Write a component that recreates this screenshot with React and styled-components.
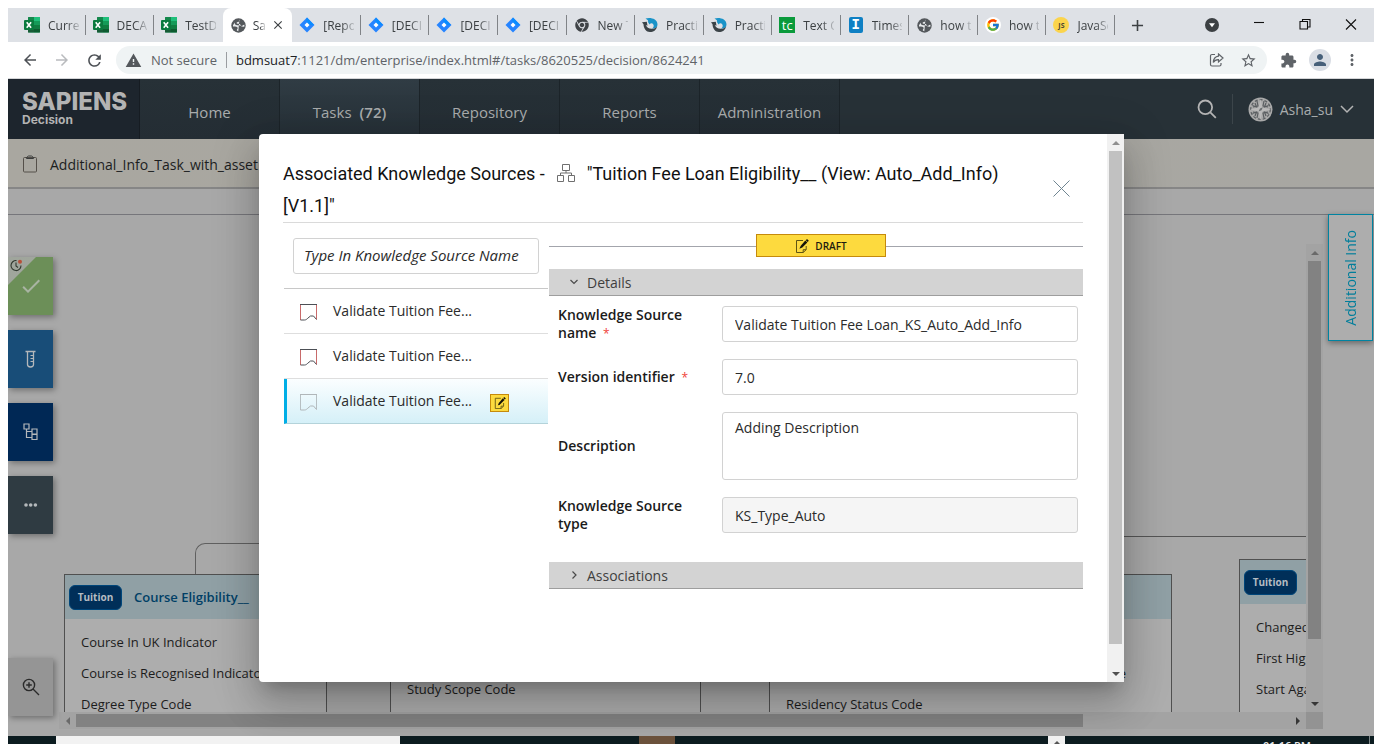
import React from "react";
import styled, { createGlobalStyle, css } from "styled-components";
import {
  MdArrowBack,
  MdArrowForward,
  MdRefresh,
  MdWarning,
  MdStarBorder,
  MdExtension,
  MdPerson,
  MdMoreVert,
  MdAdd,
  MdClose,
  MdCheck,
} from "react-icons/md";
import { FcGoogle } from "react-icons/fc";
import { FaChrome } from "react-icons/fa";

const GlobalStyle = createGlobalStyle`
  * { box-sizing: border-box; }
  body {
    margin: 0;
    background: #fff;
    font-family: "Open Sans", "Noto Sans", sans-serif;
    font-size: 14px;
    overflow: hidden;
  }
  button, input, textarea { font: inherit; color: inherit; }
  button { border: 0; padding: 0; background: none; cursor: pointer; }
  a { color: inherit; text-decoration: none; }
  svg { display: block; flex: none; }
`;

const Screen = styled.div`
  display: flex;
  flex-direction: column;
  height: 100vh;
  padding: 8px 8px 0;
`;

/* ---------- browser chrome ---------- */

const TabStrip = styled.div`
  display: flex;
  align-items: stretch;
  height: 34px;
  padding-left: 9px;
  background: #dee1e6;
`;

const Tabs = styled.div`
  display: flex;
  flex: 0 1 1098px;
  min-width: 0;
`;

const Tab = styled.button`
  position: relative;
  display: flex;
  align-items: center;
  flex: 1;
  min-width: 0;
  gap: 8px;
  padding: 0 7px;
  font-size: 12px;
  color: #3c4043;
  text-align: left;
  ${(p) =>
    p.$active
      ? css`
          background: #fff;
          border-radius: 8px 8px 0 0;
          padding-left: 8px;
          gap: 6px;
        `
      : css`
          &::after {
            content: "";
            position: absolute;
            right: 0;
            top: 7px;
            width: 1px;
            height: 20px;
            background: ${p.$noRule ? "transparent" : "#808387"};
          }
        `}
`;

const Favicon = styled.span`
  display: flex;
  justify-content: center;
  flex: 0 0 16px;
`;

const TabLabel = styled.span`
  flex: 1;
  min-width: 0;
  overflow: hidden;
  white-space: nowrap;
  mask-image: linear-gradient(to right, #000 60%, rgba(0, 0, 0, 0.2));
`;

const WindowControls = styled.div`
  display: flex;
  align-items: center;
  margin-left: auto;
  padding-right: 17px;
  gap: 34px;
  color: #111;
`;

const NewTab = styled.button`
  display: flex;
  align-items: center;
  padding-left: 13px;
  color: #3c4043;
`;

const IconButton = styled.button`
  display: flex;
  color: ${(p) => p.$color || "#5f6368"};
`;

const Toolbar = styled.div`
  display: flex;
  align-items: center;
  height: 37px;
  padding: 0 13px;
  background: #fff;
  border-bottom: 1px solid #d5d6d8;
`;

const NavButtons = styled.div`
  display: flex;
  gap: 14px;
  margin-right: 12px;
`;

const Omnibox = styled.div`
  display: flex;
  align-items: center;
  flex: 1;
  height: 28px;
  padding: 0 10px 0 9px;
  border-radius: 14px;
  background: #eff3f4;
  color: #5f6368;
  font-size: 13px;
  gap: 9px;
`;

const OmniActions = styled.div`
  display: flex;
  align-items: center;
  gap: 16px;
`;

const Separator = styled.span`
  width: 1px;
  height: 16px;
  background: #9a9da1;
`;

const Url = styled.span`
  flex: 1;
  white-space: nowrap;
  b {
    font-weight: 400;
    color: #202124;
  }
`;

const ToolIcons = styled.div`
  display: flex;
  align-items: center;
  gap: 12px;
  padding-left: 13px;
`;

const Avatar = styled.span`
  display: flex;
  align-items: center;
  justify-content: center;
  width: 22px;
  height: 22px;
  border-radius: 50%;
  background: #dadee5;
  color: #47607a;
`;

/* ---------- application ---------- */

const Page = styled.main`
  position: relative;
  display: flex;
  flex-direction: column;
  flex: 1;
  min-height: 0;
  background: #a8a8a8;
  overflow: hidden;
`;

const Header = styled.header`
  display: flex;
  flex: 0 0 60px;
  background: #273137;
  color: #a9acad;
`;

const Logo = styled.a`
  width: 132px;
  padding: 11px 0 0 14px;
  background: #1d252d;
  border-right: 1px solid #161c22;
  font-family: Inter, sans-serif;
  font-weight: 800;
  font-size: 24px;
  line-height: 23px;
  color: #b3b3b3;
  small {
    display: block;
    font-size: 12px;
    font-weight: 700;
    line-height: 14px;
  }
`;

const NavLink = styled.a`
  display: flex;
  align-items: center;
  justify-content: center;
  gap: 8px;
  width: 140px;
  padding-top: 5px;
  font-size: 15px;
  border-right: 1px solid #1c2429;
  background: ${(p) =>
    p.$active
      ? "linear-gradient(#303c44, #252f36)"
      : "linear-gradient(#273137, #242d34)"};
  b {
    font-weight: 600;
  }
`;

const UserArea = styled.div`
  display: flex;
  align-items: center;
  margin-left: auto;
  padding-right: 20px;
  gap: 15px;
`;

const HeaderRule = styled.span`
  width: 1px;
  height: 30px;
  background: #3c454a;
`;

const UserMenu = styled.button`
  display: flex;
  align-items: center;
  gap: 7px;
`;

const TaskBarRow = styled.div`
  display: flex;
  align-items: center;
  flex: 0 0 50px;
  gap: 12px;
  padding: 2px 15px 0;
  background: linear-gradient(to right, #a9a7a0, #a8a7a2);
  border-bottom: 2px solid #868686;
  color: #1c1e1f;
`;

const Strip = styled.div`
  flex: 0 0 26px;
  border-bottom: 1px solid #76767b;
`;

const Workspace = styled.div`
  display: flex;
  flex: 1;
  min-height: 0;
`;

const SideTools = styled.div`
  display: flex;
  flex-direction: column;
  flex: 0 0 45px;
  gap: 15px;
  padding: 42px 0 20px;
`;

const SideButton = styled.button`
  position: relative;
  display: flex;
  align-items: center;
  justify-content: center;
  flex: 0 0 58px;
  background: ${(p) => p.$bg};
  color: ${(p) => p.$color || "#b4b8bb"};
  box-shadow: 2px 2px 6px rgba(0, 0, 0, 0.35);
  &:last-child {
    margin-top: auto;
  }
`;

const Corner = styled.span`
  position: absolute;
  left: 0;
  top: 0;
  width: 28px;
  height: 28px;
  padding: 2px;
  background: linear-gradient(135deg, #9fa59c, #a1a79c);
  clip-path: polygon(0 0, 100% 0, 0 100%);
`;

const DiagramFrame = styled.div`
  display: grid;
  grid-template-columns: 1fr 17px;
  grid-template-rows: 1fr 17px;
  flex: 1;
  min-width: 0;
  margin: 29px 0 7px 6px;
`;

const Diagram = styled.div`
  position: relative;
  overflow: hidden;
`;

const ScrollCorner = styled.div`
  background: #939393;
`;

const Scrollbar = styled.div`
  display: flex;
  flex-direction: ${(p) => (p.$vertical ? "column" : "row")};
  align-items: center;
  background: ${(p) => p.$track};
`;

const ScrollArrow = styled.button`
  display: flex;
  align-items: center;
  justify-content: center;
  flex: none;
  width: 17px;
  height: 17px;
  color: ${(p) => p.$color};
`;

const ScrollTrack = styled.div`
  display: flex;
  flex-direction: inherit;
  align-items: center;
  flex: 1;
  min-height: 0;
`;

const ScrollThumb = styled.div`
  background: ${(p) => p.$thumb};
  ${(p) =>
    p.$vertical
      ? css`
          width: 13px;
          height: ${p.$size};
        `
      : css`
          height: 13px;
          width: ${p.$size};
        `}
`;

const RightRail = styled.div`
  flex: 0 0 51px;
  padding: 0 1px 0 5px;
  margin-top: -1px;
`;

const InfoTab = styled.button`
  display: flex;
  align-items: center;
  justify-content: center;
  width: 45px;
  height: 127px;
  border: 1px solid #0083a1;
  background: #adadad;
  color: #007e9b;
  box-shadow: 0 2px 6px rgba(0, 0, 0, 0.4);
  span {
    writing-mode: vertical-rl;
    rotate: 180deg;
  }
`;

const Node = styled.article`
  position: absolute;
  left: ${(p) => p.$x}px;
  top: ${(p) => p.$y}px;
  width: ${(p) => p.$w}px;
  height: 200px;
  border: 1px solid #505050;
  background: #adadad;
`;

const NodeHead = styled.div`
  display: flex;
  align-items: center;
  gap: 12px;
  height: 44px;
  padding: 0 4px;
  background: #90a0a5;
  color: #003f66;
  font-size: 13px;
  font-weight: 600;
  white-space: nowrap;
`;

const NodeTag = styled.span`
  display: flex;
  align-items: center;
  justify-content: center;
  width: 53px;
  height: 25px;
  border: 1px solid #00467a;
  border-radius: 6px;
  background: #002f59;
  color: #b5bcc2;
  font-size: 10px;
  font-weight: 700;
`;

const NodeItems = styled.ul`
  margin: 0;
  padding: ${(p) => p.$pad || 8}px 16px;
  list-style: none;
  font-size: 13px;
  line-height: 31px;
  color: #1c1c1c;
  white-space: nowrap;
  li {
    height: 31px;
  }
`;

const TailItem = styled.li`
  padding-right: 29px;
  text-align: right;
`;

const LeftLink = styled.div`
  position: absolute;
  left: 136px;
  top: 299px;
  width: 400px;
  height: 31px;
  border: 1px solid #606060;
  border-width: 1px 0 0 1px;
  border-radius: 10px 0 0 0;
`;

const RightLink = styled.div`
  position: absolute;
  left: 800px;
  right: 0;
  top: 292px;
  height: 1px;
  background: #555;
`;

/* ---------- dialog ---------- */

const Overlay = styled.div`
  position: absolute;
  inset: 0;
  display: flex;
  justify-content: center;
  padding: 55px 0 54px 1px;
`;

const Dialog = styled.section`
  display: flex;
  width: 865px;
  max-width: 94%;
  border-radius: 4px 0 0 4px;
  overflow: hidden;
  background: #fff;
  color: #1b1b1b;
  box-shadow: 0 11px 15px -7px rgba(0, 0, 0, 0.2),
    0 24px 38px 3px rgba(0, 0, 0, 0.14), 0 9px 46px 8px rgba(0, 0, 0, 0.12);
`;

const DialogBody = styled.div`
  flex: 1;
  min-width: 0;
  padding: 24px 24px 0;
`;

const DialogHead = styled.div`
  display: flex;
  align-items: center;
  justify-content: space-between;
  border-bottom: 1px solid #dadada;
`;

const DialogClose = styled(IconButton)`
  padding: 0 13px 4px;
`;

const DialogTitle = styled.h2`
  max-width: 740px;
  margin: 0;
  font-family: Roboto, sans-serif;
  font-size: 18px;
  font-weight: 400;
  line-height: 32px;
  color: #111;
  svg {
    display: inline-block;
    margin: 0 7px 0 8px;
    vertical-align: -2px;
  }
`;

const Columns = styled.div`
  display: grid;
  grid-template-columns: 266px 1fr;
`;

const ListColumn = styled.div`
  padding: 0 1px;
`;

const SearchBox = styled.div`
  padding: 15px 9px 14px;
  border-bottom: 1px solid #c8c8c8;
`;

const fieldStyle = css`
  display: block;
  width: 100%;
  height: 36px;
  padding: 0 12px;
  border: 1px solid #d2d2d2;
  border-radius: 3px;
  background: #fff;
  color: #2b2b2b;
  outline: 0;
`;

const Field = styled.input`
  ${fieldStyle}
  &:disabled {
    background: #f5f5f5;
  }
`;

const SearchField = styled.input`
  ${fieldStyle}
  padding: 0 10px 2px;
  font-size: 15px;
  &::placeholder {
    color: #2b2b2b;
    font-style: italic;
    opacity: 1;
  }
`;

const Source = styled.button`
  display: flex;
  align-items: center;
  width: 100%;
  height: 45px;
  padding: 0 0 2px ${(p) => (p.$selected ? 13 : 16)}px;
  gap: 15px;
  border-bottom: 1px solid #dedede;
  color: #2b2b2b;
  ${(p) =>
    p.$selected &&
    css`
      border-left: 3px solid #00aee6;
      border-bottom-color: #b4d3da;
      background: linear-gradient(#fbfeff, #d5f0f8);
    `}
`;

const SourceIcon = styled.span`
  padding-top: 4px;
`;

const TextArea = styled.textarea`
  ${fieldStyle}
  height: 68px;
  padding: 5px 12px;
  line-height: 20px;
  resize: none;
`;

const DraftMark = styled.span`
  display: flex;
  align-items: center;
  justify-content: center;
  width: 19px;
  height: 18px;
  margin: 5px 0 0 3px;
  border: 1px solid #c58a0c;
  background: #fdda3e;
`;

const Status = styled.div`
  display: flex;
  align-items: center;
  padding: 11px 0 12px;
  &::before,
  &::after {
    content: "";
    height: 1px;
    margin-top: 2px;
    background: #a3a5ac;
  }
  &::before {
    flex: 207;
  }
  &::after {
    flex: 197;
  }
`;

const StatusBadge = styled.span`
  display: flex;
  align-items: center;
  justify-content: center;
  gap: 6px;
  width: 130px;
  height: 23px;
  border: 1px solid #c58a0c;
  background: #fdda3e;
  font-size: 10px;
  font-weight: 600;
  color: #1c1a10;
`;

const SectionBar = styled.button`
  display: flex;
  align-items: center;
  width: 100%;
  height: 27px;
  gap: 8px;
  padding-left: 20px;
  border-bottom: 1px solid #9e9e9e;
  background: #d3d3d3;
  color: #3f3f3f;
`;

const Form = styled.form`
  display: grid;
  gap: 17px;
  padding: 10px 5px 29px 9px;
`;

const FormRow = styled.div`
  display: grid;
  grid-template-columns: 164px 1fr;
  align-items: center;
`;

const Label = styled.label`
  padding-right: 20px;
  font-weight: 600;
  line-height: 18px;
  i {
    margin-left: 3px;
    font-size: 12px;
    font-style: normal;
    font-weight: 400;
    line-height: 1;
    color: #f0433a;
  }
`;

/* ---------- desktop task bar ---------- */

const OsBar = styled.footer`
  display: flex;
  flex: 0 0 8px;
  padding: 0 4px 0 48px;
  overflow: hidden;
  background: #0c1c20;
  color: #e8e8e8;
`;

const OsBlock = styled.span`
  display: flex;
  justify-content: center;
  flex: 0 0 ${(p) => p.$w}px;
  padding-top: 5px;
  background: ${(p) => p.$bg};
  margin-left: ${(p) => p.$gap || 0}px;
  color: #555;
`;

const Clock = styled.time`
  height: 8px;
  margin-left: auto;
  padding-right: 58px;
  border-right: 1px solid #7d8789;
  font-size: 11px;
  font-weight: 600;
  line-height: 20px;
`;

/* ---------- drawings ---------- */

const ExcelIcon = () => (
  <svg width="16" height="16" viewBox="0 0 16 16">
    <rect x="4" width="12" height="15.500" rx="1" fill="#21a366" />
    <path d="M4 0h6v4H4z" fill="#107c41" opacity=".7" />
    <path d="M10 0h6v4h-6z" fill="#1fbf7b" />
    <path d="M10 4h6v4h-6z" fill="#159a58" />
    <path d="M4 8h6v7.500H4z" fill="#185c37" />
    <path d="M10 8h6v4h-6z" fill="#107c41" />
    <path d="M10 12h6v3.500h-6z" fill="#0d5c30" />
    <rect y="3" width="10" height="10" rx="1" fill="#0a7a3e" />
    <path d="M2.700 5.200l4.400 5.600M7.100 5.200l-4.400 5.600" stroke="#fff" strokeWidth="1.600" />
  </svg>
);

const GlobeIcon = () => (
  <svg width="15" height="15" viewBox="0 0 16 16">
    <circle cx="8" cy="8" r="7.700" fill="#54585c" />
    <path
      d="M9 1.600c1 1.600-.4 2.300-2 2.600-1.300.5-1.400 1.400-.4 1.900 1.700-.1 3.600 0 3.600 1.600.5 1.200 2 .9 2.700-.2l1.500-.3-.2 2c-1.600.3-2.700.1-3.700-.6C9.200 7.800 8 7.900 6.800 7.800 4.800 7.700 3.700 6.500 4 4.900L2.100 7.600l.1 1.600c2 0 4.300-.1 4.900 1.300.4 1.200-1 1.500-.9 2.800l1.600.8"
      fill="#e8eaec"
    />
  </svg>
);

const JiraIcon = () => (
  <svg width="16" height="16" viewBox="0 0 16 16">
    <path d="M8 .5L15.500 8 8 15.500.5 8z" fill="#2684ff" />
    <path d="M8 .5c-1.500 2-1 3.500 0 5L10.500 8l4.500 0z" fill="#0a8cff" />
    <path d="M8 5.500L10.500 8 8 10.500 5.500 8z" fill="#fff" />
  </svg>
);

const SwirlIcon = () => (
  <svg width="16" height="16" viewBox="0 0 16 16">
    <path d="M3.500 1.500C8 0 15.500 1.500 15.500 7.500c0 3-2.500 4.500-5.500 4 1.700-.9 2.300-2.600 1.200-4.200C10.300 6 8.700 6 7.500 7.500L5.800 4.800C7 4 5.500 2.800 3.500 1.500z" fill="#1a93c8" />
    <path d="M0 5.200l4.800-.4.700 4-1.700-.7c.8 2.200 3 3.600 5.700 3.700 2.400.1 4.300-.8 5.700-2.600-.9 3.900-3.900 6-7.400 5.900C4.300 15 1.600 11.500 1.500 7.300z" fill="#3b4348" />
  </svg>
);

const SquareIcon = styled.span`
  display: flex;
  align-items: center;
  justify-content: center;
  width: ${(p) => p.$w || 16}px;
  height: 16px;
  border-radius: ${(p) => p.$radius || 0}px;
  background: ${(p) => p.$bg};
  color: ${(p) => p.$color || "#fff"};
  font: ${(p) => p.$font};
`;

const OrgIcon = () => (
  <svg width="18" height="18" viewBox="0 0 18 18" fill="none" stroke="#6f6f6f">
    <path d="M5.500.5h7v6h-7zM.5 11.500h6v6h-6zM11.500 11.500h6v6h-6zM9 6.500v2.500M3.500 11.500V9h11v2.500" />
  </svg>
);

const BookmarkIcon = ({ faded }) => (
  <svg
    width="18"
    height="18"
    viewBox="0 0 18 18"
    fill="none"
    stroke={faded ? "#b6bfc2" : "#c86a6a"}
  >
    <path d="M.5 1v16M16.500 1v15.500" />
    <path
      d="M0 1.500h17M.5 17h4c1.500 0 2.500-1 3.500-2l2.500-2h3l3 3.500"
      stroke={faded ? "#b0b6b9" : "#4c4f55"}
    />
  </svg>
);

const EditIcon = ({ size }) => (
  <svg width={size} height={size} viewBox="0 0 14 14" fill="none">
    <path
      d="M8 1.500H1.500v12h6.700l3-2.800V7M8.200 13.300v-2.600h2.900"
      stroke="#5f5413"
    />
    <path d="M12 0l1.800 1.800-1.200 1.200-1.800-1.800z" fill="#15130a" />
    <path d="M10.300 1.600l2 2-5 5-2.900 1.200 1.200-2.900z" fill="#15130a" />
  </svg>
);

const CrossIcon = () => (
  <svg width="17" height="17" viewBox="0 0 17 17" stroke="#6f8591" fill="none">
    <path d="M.5.5l16 16M16.500.5l-16 16" />
  </svg>
);

const Chevron = ({ right }) => (
  <svg width="10" height="10" viewBox="0 0 10 10" fill="none" stroke="#4a4a4a" strokeWidth="1.200">
    <path d={right ? "M3.500 1.500L7 5 3.500 8.500" : "M1.500 3L5 6.500 8.500 3"} />
  </svg>
);

const arrows = {
  up: "M4 0l4 4H0z",
  down: "M0 0h8L4 4z",
  left: "M4 0v8L0 4z",
  right: "M0 0l4 4-4 4z",
};

const Triangle = ({ dir }) => {
  const flat = dir === "up" || dir === "down";
  return (
    <svg width={flat ? 8 : 4} height={flat ? 4 : 8} fill="currentColor">
      <path d={arrows[dir]} />
    </svg>
  );
};

const ClipboardIcon = () => (
  <svg width="15" height="18" viewBox="0 0 15 18" fill="none" stroke="#3a3c3c">
    <rect x=".5" y="2.500" width="13" height="14.500" rx="1" stroke="#55504a" />
    <path d="M3.500 3.500v-1l2-1.500h3l2 1.500v1z" />
  </svg>
);

const MandalaIcon = () => (
  <svg width="25" height="25" viewBox="0 0 25 25">
    <circle cx="12.500" cy="12.500" r="12" fill="#a9a9a9" />
    <g fill="none" stroke="#5a5e61" strokeWidth="1.200">
      <circle cx="12.500" cy="12.500" r="9.800" strokeDasharray="3 2" />
      <path d="M4.500 8.500l4 1.500-1.500-4M20.500 8.500l-4 1.500 1.500-4M4.500 16.500l4-1.500-1.500 4M20.500 16.500l-4-1.500 1.500 4" />
      <path d="M9 4l1 5-5 1M16 4l-1 5 5 1M9 21l1-5-5-1M16 21l-1-5 5-1" />
    </g>
    <path d="M12.500 2l2 8.500 8.500 2-8.500 2-2 8.500-2-8.500-8.500-2 8.500-2z" fill="#bababa" />
    <path d="M10.500 14.500l1.500-3 2.800-1.200-1.300 3z" fill="#6a6e70" />
  </svg>
);

const SearchIcon = () => (
  <svg width="20" height="20" viewBox="0 0 20 20" fill="none" stroke="#b4b4b4" strokeWidth="1.800">
    <circle cx="8.300" cy="8.300" r="6.800" />
    <path d="M13.300 13.300l5.500 5.500" />
  </svg>
);

const TubeIcon = () => (
  <svg width="11" height="18" viewBox="0 0 11 18" fill="none" stroke="currentColor">
    <path d="M.5 1.500h10M2.500 1.500v13c0 3.300 6 3.300 6 0v-13" strokeWidth="1.300" />
    <path d="M5.500 5.500h3M5.500 8.500h3M5.500 11.500h3" />
  </svg>
);

const TreeIcon = () => (
  <svg width="15" height="18" viewBox="0 0 15 18" fill="none" stroke="currentColor" strokeWidth="1.200">
    <path d="M1 1h5v5H1zM9 6h5v5H9zM9 11.500h5v5H9zM3.500 6v8.500H9M3.500 8.500H9" />
  </svg>
);

const ZoomInIcon = () => (
  <svg width="18" height="18" viewBox="0 0 18 18" fill="none" stroke="#2a2a2a" strokeWidth="1.400">
    <circle cx="7" cy="7" r="5.600" />
    <path d="M11 11l6 6M7 4.200v5.600M4.200 7h5.600" />
  </svg>
);

const ClockIcon = () => (
  <svg width="13" height="13" viewBox="0 0 13 13" fill="none" stroke="#30382f" strokeWidth="1.100">
    <path d="M6.500 1.600A5 5 0 1 0 11 6.500M6 3.500v3.500l2 1.500" />
    <circle cx="10" cy="2.800" r="2" fill="#b8503a" stroke="none" />
  </svg>
);

const DotsIcon = () => (
  <svg width="14" height="4" viewBox="0 0 14 4" fill="currentColor">
    <circle cx="2" cy="2" r="1.800" />
    <circle cx="6.700" cy="2" r="1.800" />
    <circle cx="11.400" cy="2" r="1.800" />
  </svg>
);

const ShareIcon = () => (
  <svg width="15" height="14" viewBox="0 0 15 14" fill="none" stroke="currentColor" strokeWidth="1.200">
    <path d="M6 1.500H3A1.500 1.500 0 0 0 1.500 3v8.500A1.500 1.500 0 0 0 3 13h7.500a1.500 1.500 0 0 0 1.500-1.500V10" />
    <path d="M9.500 1l4.500 4-4.500 4V6.700C7 6.600 5.500 7.500 4.300 9.500 4.500 6 6.200 3.600 9.500 3.200z" />
  </svg>
);

const WindowIcon = ({ d }) => (
  <svg width="12" height="12" viewBox="0 0 12 12" fill="none" stroke="#111" strokeWidth="1.100">
    <path d={d} />
  </svg>
);

/* ---------- data ---------- */

const tabs = [
  { icon: <ExcelIcon />, label: "Current" },
  { icon: <ExcelIcon />, label: "DECAF" },
  { icon: <ExcelIcon />, label: "TestData", noRule: true },
  { icon: <GlobeIcon />, label: "Sapiens", active: true },
  { icon: <JiraIcon />, label: "[Report" },
  { icon: <JiraIcon />, label: "[DECIS" },
  { icon: <JiraIcon />, label: "[DECIS" },
  { icon: <JiraIcon />, label: "[DECIS" },
  { icon: <FaChrome size={14} color="#3f4347" />, label: "New Tab" },
  { icon: <SwirlIcon />, label: "Practice" },
  { icon: <SwirlIcon />, label: "Practice" },
  {
    icon: (
      <SquareIcon $bg="#0a9a3c" $font='13px "Open Sans", sans-serif'>
        tc
      </SquareIcon>
    ),
    label: "Text Co",
  },
  {
    icon: (
      <SquareIcon $bg="#0f80c4" $w={14} $radius={2} $font='bold 14px "Liberation Mono", monospace'>
        I
      </SquareIcon>
    ),
    label: "Timesh",
  },
  { icon: <GlobeIcon />, label: "how to" },
  {
    icon: (
      <SquareIcon $bg="#fff" $radius={8}>
        <FcGoogle size={14} />
      </SquareIcon>
    ),
    label: "how to",
  },
  {
    icon: (
      <SquareIcon $bg="#fbd44c" $color="#4b4630" $radius={8} $font='bold 7px "Open Sans", sans-serif'>
        JS
      </SquareIcon>
    ),
    label: "JavaScr",
  },
];

const navItems = ["Repository", "Reports", "Administration"];

const ScrollBarView = ({ vertical, track, thumb, size, first, last }) => (
  <Scrollbar $vertical={vertical} $track={track}>
    <ScrollArrow $color={first} aria-label={vertical ? "Scroll up" : "Scroll left"}>
      <Triangle dir={vertical ? "up" : "left"} />
    </ScrollArrow>
    <ScrollTrack>
      <ScrollThumb $vertical={vertical} $thumb={thumb} $size={size} />
    </ScrollTrack>
    <ScrollArrow $color={last} aria-label={vertical ? "Scroll down" : "Scroll right"}>
      <Triangle dir={vertical ? "down" : "right"} />
    </ScrollArrow>
  </Scrollbar>
);

const Browser = () => (
  <>
    <TabStrip>
      <Tabs>
        {tabs.map((tab, i) => (
          <Tab key={i} $active={tab.active} $noRule={tab.noRule}>
            <Favicon>{tab.icon}</Favicon>
            <TabLabel>{tab.label}</TabLabel>
            {tab.active && <MdClose size={14} />}
          </Tab>
        ))}
      </Tabs>
      <NewTab aria-label="New tab">
        <MdAdd size={19} />
      </NewTab>
      <WindowControls>
        <IconButton aria-label="Search tabs">
          <svg width="14" height="14" viewBox="0 0 14 14">
            <circle cx="7" cy="7" r="7" fill="#3c4043" />
            <path d="M4 5.200h6L7 9.200z" fill="#fff" />
          </svg>
        </IconButton>
        <IconButton aria-label="Minimize">
          <WindowIcon d="M1 3.500h10" />
        </IconButton>
        <IconButton aria-label="Restore">
          <WindowIcon d="M1 2.500h7.500V10H1zM3.500 2.500V.5H11V8H8.500" />
        </IconButton>
        <IconButton aria-label="Close">
          <WindowIcon d="M1 .5l10 10M11 .5l-10 10" />
        </IconButton>
      </WindowControls>
    </TabStrip>
    <Toolbar>
      <NavButtons>
        <IconButton aria-label="Back" $color="#4d5156">
          <MdArrowBack size={18} />
        </IconButton>
        <IconButton aria-label="Forward" $color="#b9bbbe">
          <MdArrowForward size={18} />
        </IconButton>
        <IconButton aria-label="Reload" $color="#4d5156">
          <MdRefresh size={19} />
        </IconButton>
      </NavButtons>
      <Omnibox>
        <MdWarning size={17} color="#54585c" />
        <span>Not secure</span>
        <Separator />
        <Url>
          <b>bdmsuat7</b>:1121/dm/enterprise/index.html#/tasks/8620525/decision/8624241
        </Url>
        <OmniActions>
          <IconButton aria-label="Share">
            <ShareIcon />
          </IconButton>
          <IconButton aria-label="Bookmark">
            <MdStarBorder size={17} />
          </IconButton>
        </OmniActions>
      </Omnibox>
      <ToolIcons>
        <IconButton aria-label="Extensions">
          <MdExtension size={17} />
        </IconButton>
        <Avatar>
          <MdPerson size={18} />
        </Avatar>
        <IconButton aria-label="Menu">
          <MdMoreVert size={18} />
        </IconButton>
      </ToolIcons>
    </Toolbar>
  </>
);

const DiagramView = () => (
  <DiagramFrame>
    <Diagram>
      <LeftLink />
      <RightLink />
      <Node $x={5} $y={330} $w={263}>
        <NodeHead>
          <NodeTag>Tuition</NodeTag>
          Course Eligibility__
        </NodeHead>
        <NodeItems>
          <li>Course In UK Indicator</li>
          <li>Course is Recognised Indicator</li>
          <li>Degree Type Code</li>
        </NodeItems>
      </Node>
      <Node $x={331} $y={330} $w={311}>
        <NodeHead />
        <NodeItems $pad={55}>
          <li>Study Scope Code</li>
        </NodeItems>
      </Node>
      <Node $x={710} $y={330} $w={403}>
        <NodeHead />
        <NodeItems $pad={39}>
          <TailItem>e</TailItem>
          <li>Residency Status Code</li>
        </NodeItems>
      </Node>
      <Node $x={1180} $y={315} $w={300}>
        <NodeHead>
          <NodeTag>Tuition</NodeTag>
        </NodeHead>
        <NodeItems>
          <li>Changed</li>
          <li>First High</li>
          <li>Start Again</li>
        </NodeItems>
      </Node>
    </Diagram>
    <ScrollBarView vertical track="#a3a3a3" thumb="#828282" size="87%" first="#6a6a6a" last="#363636" />
    <ScrollBarView track="#a3a3a3" thumb="#828282" size="83%" first="#6a6a6a" last="#363636" />
    <ScrollCorner />
  </DiagramFrame>
);

const sources = [{}, {}, { selected: true }];

const KnowledgeDialog = () => (
  <Overlay>
    <Dialog role="dialog" aria-labelledby="dialog-title">
      <DialogBody>
        <DialogHead>
          <DialogTitle id="dialog-title">
            Associated Knowledge Sources - <OrgIcon /> "Tuition Fee Loan
            Eligibility__ (View: Auto_Add_Info) [V1.1]"
          </DialogTitle>
          <DialogClose aria-label="Close dialog">
            <CrossIcon />
          </DialogClose>
        </DialogHead>
        <Columns>
          <ListColumn>
            <SearchBox>
              <SearchField
                aria-label="Knowledge source name"
                placeholder="Type In Knowledge Source Name"
              />
            </SearchBox>
            {sources.map((source, i) => (
              <Source key={i} $selected={source.selected}>
                <SourceIcon>
                  <BookmarkIcon faded={source.selected} />
                </SourceIcon>
                Validate Tuition Fee...
                {source.selected && (
                  <DraftMark>
                    <EditIcon size={12} />
                  </DraftMark>
                )}
              </Source>
            ))}
          </ListColumn>
          <div>
            <Status>
              <StatusBadge>
                <EditIcon size={14} />
                DRAFT
              </StatusBadge>
            </Status>
            <SectionBar aria-expanded="true">
              <Chevron />
              Details
            </SectionBar>
            <Form>
              <FormRow>
                <Label htmlFor="ks-name">
                  Knowledge Source name <i>*</i>
                </Label>
                <Field id="ks-name" defaultValue="Validate Tuition Fee Loan_KS_Auto_Add_Info" />
              </FormRow>
              <FormRow>
                <Label htmlFor="ks-version">
                  Version identifier <i>*</i>
                </Label>
                <Field id="ks-version" defaultValue="7.0" />
              </FormRow>
              <FormRow>
                <Label htmlFor="ks-description">Description</Label>
                <TextArea id="ks-description" defaultValue="Adding Description" />
              </FormRow>
              <FormRow>
                <Label htmlFor="ks-type">Knowledge Source type</Label>
                <Field id="ks-type" disabled defaultValue="KS_Type_Auto" />
              </FormRow>
            </Form>
            <SectionBar aria-expanded="false">
              <Chevron right />
              Associations
            </SectionBar>
          </div>
        </Columns>
      </DialogBody>
      <ScrollBarView vertical track="#f1f1f1" thumb="#c1c1c1" size="96%" first="#8f8f8f" last="#505050" />
    </Dialog>
  </Overlay>
);

export default function App() {
  return (
    <Screen>
      <GlobalStyle />
      <Browser />
      <Page>
        <Header>
          <Logo href="#">
            SAPIENS
            <small>Decision</small>
          </Logo>
          <NavLink href="#home">Home</NavLink>
          <NavLink href="#tasks" $active>
            Tasks <b>(72)</b>
          </NavLink>
          {navItems.map((item) => (
            <NavLink key={item} href={`#${item}`}>
              {item}
            </NavLink>
          ))}
          <UserArea>
            <IconButton aria-label="Search">
              <SearchIcon />
            </IconButton>
            <HeaderRule />
            <UserMenu>
              <MandalaIcon />
              Asha_su
              <svg width="14" height="9" viewBox="0 0 14 9" fill="none" stroke="#b4b4b4" strokeWidth="1.500">
                <path d="M1 1l6 6 6-6" />
              </svg>
            </UserMenu>
          </UserArea>
        </Header>
        <TaskBarRow>
          <ClipboardIcon />
          Additional_Info_Task_with_asset
        </TaskBarRow>
        <Strip />
        <Workspace>
          <SideTools>
            <SideButton $bg="#6c8f58" $color="#a9b4a3" aria-label="Approve">
              <MdCheck size={24} />
              <Corner>
                <ClockIcon />
              </Corner>
            </SideButton>
            <SideButton $bg="#184d78" aria-label="Test">
              <TubeIcon />
            </SideButton>
            <SideButton $bg="#002855" aria-label="Hierarchy">
              <TreeIcon />
            </SideButton>
            <SideButton $bg="#2f3b42" aria-label="More">
              <DotsIcon />
            </SideButton>
            <SideButton $bg="#959595" aria-label="Zoom in">
              <ZoomInIcon />
            </SideButton>
          </SideTools>
          <DiagramView />
          <RightRail>
            <InfoTab>
              <span>Additional Info</span>
            </InfoTab>
          </RightRail>
        </Workspace>
        <KnowledgeDialog />
      </Page>
      <OsBar>
        <OsBlock $w={344} $bg="#f2f2f2" />
        <OsBlock $w={36} $gap={239} $bg="#6b513b" />
        <OsBlock $w={17} $gap={373} $bg="#f1f1f1">
          <Triangle dir="up" />
        </OsBlock>
        <Clock>01:16 PM</Clock>
      </OsBar>
    </Screen>
  );
}
